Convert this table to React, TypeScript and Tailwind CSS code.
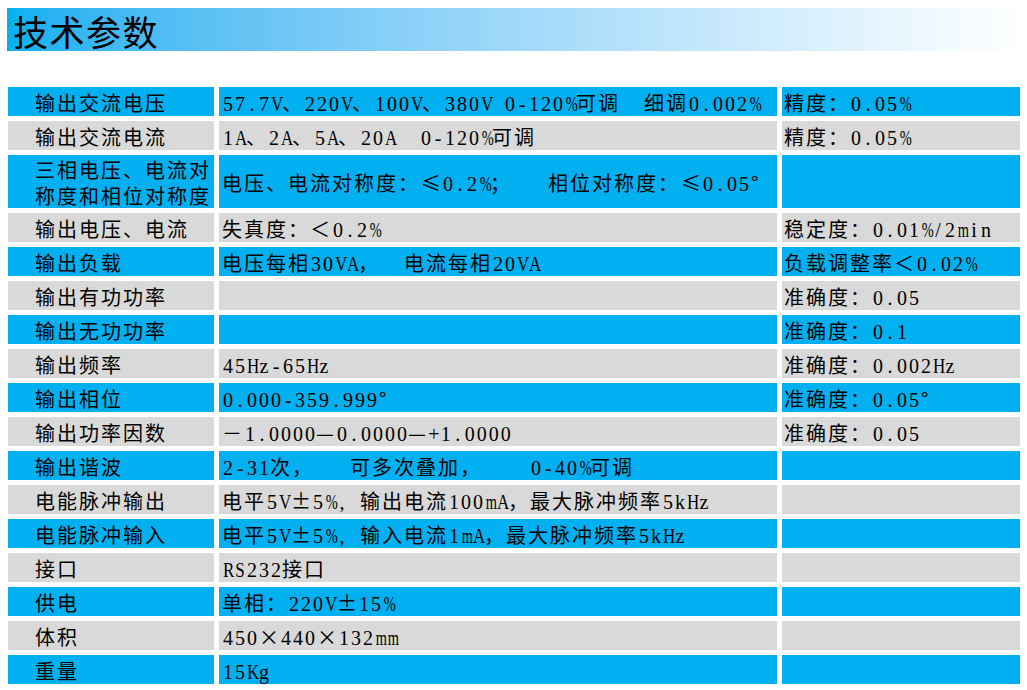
import React from "react";

const BLUE = "blue";
const GRAY = "gray";

type Row = { c: [string, string, string]; two?: boolean };

const rows: Row[] = [
  { c: ["输出交流电压", "57.7V、220V、100V、380V 0-120%可调  细调0.002%", "精度：0.05%"] },
  { c: ["输出交流电流", "1A、2A、5A、20A  0-120%可调", "精度：0.05%"] },
  { c: ["三相电压、电流对|称度和相位对称度", "电压、电流对称度：≤0.2%；   相位对称度：≤0.05°", ""], two: true },
  { c: ["输出电压、电流", "失真度：＜0.2%", "稳定度：0.01%/2min"] },
  { c: ["输出负载", "电压每相30VA，  电流每相20VA", "负载调整率＜0.02%"] },
  { c: ["输出有功功率", "", "准确度：0.05"] },
  { c: ["输出无功功率", "", "准确度：0.1"] },
  { c: ["输出频率", "45Hz-65Hz", "准确度：0.002Hz"] },
  { c: ["输出相位", "0.000-359.999°", "准确度：0.05°"] },
  { c: ["输出功率因数", "－1.0000—0.0000—+1.0000", "准确度：0.05"] },
  { c: ["输出谐波", "2-31次，   可多次叠加，    0-40%可调", ""] },
  { c: ["电能脉冲输出", "电平5V±5%, 输出电流100mA，最大脉冲频率5kHz", ""] },
  { c: ["电能脉冲输入", "电平5V±5%, 输入电流1mA，最大脉冲频率5kHz", ""] },
  { c: ["接口", "RS232接口", ""] },
  { c: ["供电", "单相：220V±15%", ""] },
  { c: ["体积", "450×440×132mm", ""] },
  { c: ["重量", "15Kg", ""] },
];

function Latin({ ch }: { ch: string }) {
  if (ch === "m" || ch === "%" || ch === "M" || ch === "W") {
    return (
      <span className="inline-block w-[12px] text-center tracking-normal whitespace-pre font-['Liberation_Serif',serif] text-[20px] scale-x-[0.72]">
        {ch}
      </span>
    );
  }
  if (/[A-Z]/.test(ch)) {
    return (
      <span className="inline-block w-[12px] text-center tracking-normal whitespace-pre font-['Liberation_Serif',serif] text-[20px] scale-x-[0.85]">
        {ch}
      </span>
    );
  }
  return (
    <span className="inline-block w-[12px] text-center tracking-normal whitespace-pre font-['Liberation_Serif',serif] text-[20px]">
      {ch}
    </span>
  );
}

function T({ s }: { s: string }) {
  const parts = s.match(/[\x20-\x7E]+|[±×≤°]|[^\x20-\x7E±×≤°]+/g) || [];
  return (
    <>
      {parts.map((p, i) => {
        if (/^[\x20-\x7E]/.test(p)) {
          return (
            <React.Fragment key={i}>
              {p.split("").map((ch, j) => (
                <Latin key={j} ch={ch} />
              ))}
            </React.Fragment>
          );
        }
        if (/^[±×≤]$/.test(p)) {
          return (
            <span key={i} className="inline-block w-[22px] text-center tracking-normal">
              {p}
            </span>
          );
        }
        if (p === "°") {
          return (
            <span key={i} className="inline-block w-[22px] text-left tracking-normal pl-[1px]">
              {p}
            </span>
          );
        }
        return <span key={i}>{p}</span>;
      })}
    </>
  );
}

function Cell({ text, color, tall, col }: { text: string; color: string; tall: boolean; col: number }) {
  const bg = color === BLUE ? "bg-[#00b0f0]" : "bg-[#d9d9d9]";
  const h = tall ? "h-[53px]" : "h-[29px]";
  const pad = col === 0 ? "pl-[27px]" : col === 1 ? "pl-[3px]" : "pl-[2px]";
  const lines = text.split("|");
  return (
    <div className={`${bg} ${h} ${pad} flex items-center pt-[3px] whitespace-nowrap overflow-visible`}>
      <div className="leading-[26px]">
        {lines.map((l, i) => (
          <div key={i}>
            <T s={l} />
          </div>
        ))}
      </div>
    </div>
  );
}

export default function App() {
  return (
    <div className="w-[1027px] h-[690px] bg-white overflow-hidden font-['Noto_Sans_CJK_SC',sans-serif] text-black">
      <div className="pt-[8px] pl-[7px]">
        <div className="w-[1013px] h-[43px] bg-linear-to-r from-[#00b0f0] to-white flex items-center pl-[6px]">
          <span className="text-[35px] leading-[43px] tracking-[1.5px] pt-[2px]">技术参数</span>
        </div>
      </div>
      <div className="mt-[36px] ml-[8px] grid grid-cols-[206px_558px_238px] gap-x-[5px] gap-y-[5px] text-[20px] tracking-[2px]">
        {rows.map((r, ri) => {
          const color = ri % 2 === 0 ? BLUE : GRAY;
          return (
            <React.Fragment key={ri}>
              {r.c.map((t, ci) => (
                <Cell key={ci} text={t} color={color} tall={!!r.two} col={ci} />
              ))}
            </React.Fragment>
          );
        })}
      </div>
    </div>
  );
}
